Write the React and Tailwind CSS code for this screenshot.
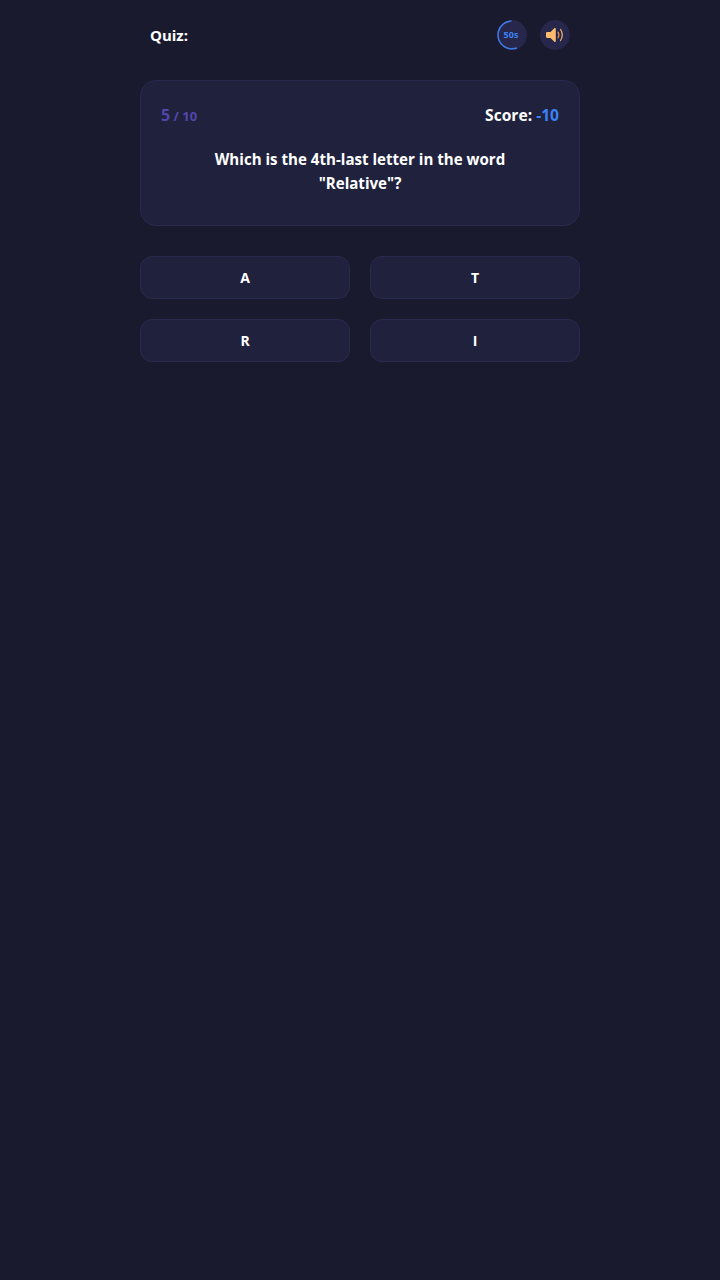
export default function App() {
  const font = "font-['Open_Sans',sans-serif]";
  const Option = ({ t }) => (
    <button className="h-[43px] rounded-xl border border-[#2a2a4e] bg-[#20213d] text-[14px] font-bold text-white flex items-center justify-center">
      {t}
    </button>
  );
  return (
    <div className={`min-h-[1280px] bg-[#1a1a2e] ${font}`}>
      <div className="mx-auto w-[440px]">
        <header className="h-[70px] mb-[10px] px-[10px] flex items-center justify-between">
          <div className="text-[15px] font-bold text-white">Quiz:</div>
          <div className="flex items-center gap-[13px]">
            <div className="relative w-[30px] h-[30px] rounded-full bg-[#26274a] flex items-center justify-center">
              <svg className="absolute inset-0" width="30" height="30" viewBox="0 0 30 30" fill="none">
                <path d="M14.500 1A14 14 0 0 0 7 26.500C11 29 15.500 29.500 20 28" stroke="#3f78e8" strokeWidth="1.500" />
              </svg>
              <span className="pr-[2px] text-[9px] font-bold text-[#3b82f6]">50s</span>
            </div>
            <div className="w-[30px] h-[30px] rounded-full bg-[#26274a] flex items-center justify-center">
              <svg width="18" height="16" viewBox="0 0 18 16" fill="none">
                <path d="M0 6.200C0 5.500.5 5 1.200 5H4.500L8.300 1.300C8.900.8 9.800 1.200 9.800 2V14C9.800 14.800 8.900 15.200 8.300 14.700L4.500 11H1.200C.5 11 0 10.500 0 9.800Z" fill="#fcbb6d" />
                <path d="M12 5.200c1.100 1.700 1.100 4 0 5.600" stroke="#ec8a4c" strokeWidth="1.200" strokeLinecap="round" />
                <path d="M14.500 2.500c2.300 3 2.300 8 0 11" stroke="#fcbb6d" strokeWidth="1.200" strokeLinecap="round" />
              </svg>
            </div>
          </div>
        </header>

        <section className="h-[146px] rounded-2xl border border-[#2a2a4e] bg-[#20213d] px-5 pt-[20px]">
          <div className="flex items-center justify-between h-[28px]">
            <div className="font-bold text-[#5047aa]">
              <span className="text-[16px]">5</span>
              <span className="text-[13px]"> / 10</span>
            </div>
            <div className="pt-[2px] text-[15.6px] font-bold text-white">
              Score: <span className="text-[#3b82f6]">-10</span>
            </div>
          </div>
          <p className="mt-[18px] text-center text-[15.1px] leading-[24px] font-bold text-white">
            Which is the 4th-last letter in the word
            <br />
            "Relative"?
          </p>
        </section>

        <div className="mt-[30px] grid grid-cols-2 gap-x-5 gap-y-5">
          <Option t="A" />
          <Option t="T" />
          <Option t="R" />
          <Option t="I" />
        </div>
      </div>
    </div>
  );
}
